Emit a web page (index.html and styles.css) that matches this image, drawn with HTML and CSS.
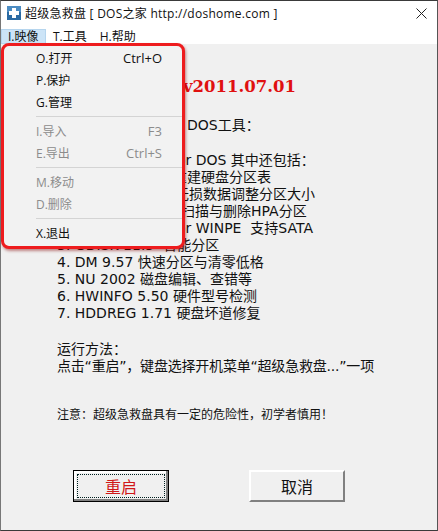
FILE: index.html
```html
<!DOCTYPE html>
<html lang="zh">
<head>
<meta charset="utf-8">
<title>超级急救盘</title>
<link rel="stylesheet" href="styles.css">
</head>
<body>
<div class="window">
  <header class="titlebar">
    <svg class="app-icon" width="14" height="14" viewBox="0 0 14 14"><rect width="14" height="14" fill="#2a6aa3"/><rect width="14" height="6" fill="#4c8cc2"/><path d="M5 2h4v3h3v4H9v3H5V9H2V5h3z" fill="#fff"/></svg>
    <span class="title-text">超级急救盘 [ DOS之家 http://doshome.com ]</span>
    <svg class="close" width="11" height="11" viewBox="0 0 11 11"><path d="M.5.5l10 10M10.5.5l-10 10" stroke="#222" stroke-width="1" fill="none"/></svg>
  </header>
  <nav class="menubar">
    <span class="menu-item active">I.映像</span>
    <span class="menu-item">T.工具</span>
    <span class="menu-item">H.帮助</span>
  </nav>
  <main class="client">
    <div class="content">
      <div class="version">v2011.07.01</div>
      <div class="intro">DOS工具&#xFF1A;</div>
      <div class="tools">
        <div class="tail-for">for DOS 其中还包括&#xFF1A;</div>
        <div class="sub-a">重建硬盘分区表</div>
        <div class="sub-b">无损数据调整分区大小</div>
        <div class="sub-c">扫描与删除HPA分区</div>
        <div class="tail-for">for WINPE&nbsp; 支持SATA</div>
        <div>3. GDISK 11.5&nbsp; 智能分区</div>
        <div>4. DM 9.57 快速分区与清零低格</div>
        <div>5. NU 2002 磁盘编辑、查错等</div>
        <div>6. HWINFO 5.50 硬件型号检测</div>
        <div>7. HDDREG 1.71 硬盘坏道修复</div>
      </div>
      <div class="usage">
        <div>运行方法&#xFF1A;</div>
        <div class="usage-line">点击“重启”&#xFF0C;键盘选择开机菜单“超级急救盘...”一项</div>
      </div>
      <div class="note">注意&#xFF1A;超级急救盘具有一定的危险性&#xFF0C;初学者慎用&#xFF01;</div>
    </div>
    <div class="buttons">
      <button class="btn primary"><span class="focus">重启</span></button>
      <button class="btn"><span class="plain">取消</span></button>
    </div>
    <div class="dropdown">
      <div class="drop-row"><span>O.打开</span><span class="key">Ctrl+O</span></div>
      <div class="drop-row"><span>P.保护</span></div>
      <div class="drop-row"><span>G.管理</span></div>
      <div class="sep"></div>
      <div class="drop-row off"><span>I.导入</span><span class="key">F3</span></div>
      <div class="drop-row off"><span>E.导出</span><span class="key">Ctrl+S</span></div>
      <div class="sep"></div>
      <div class="drop-row off"><span>M.移动</span></div>
      <div class="drop-row off"><span>D.删除</span></div>
      <div class="sep"></div>
      <div class="drop-row"><span>X.退出</span></div>
    </div>
  </main>
</div>
</body>
</html>
```
FILE: styles.css
```css
* { box-sizing: border-box; }
html, body { margin: 0; height: 100%; }
body { font-family: "DejaVu Sans", "Noto Sans CJK SC", sans-serif; overflow: hidden; }
.window { position: relative; width: 438px; height: 531px; display: flex; flex-direction: column; background: #f0f0f0; border: 1px solid #3a3a3a; border-left-color: #777; border-right-color: #555; }
.titlebar { height: 28px; background: #fff; display: flex; align-items: center; padding: 0 10px 4px 6px; font: 12px "Open Sans", "Noto Sans CJK SC", sans-serif; color: #111; }
.app-icon { margin-right: 4px; }
.title-text { flex: 1; letter-spacing: 0.25px; }
.menubar { height: 15px; background: #fff; display: flex; font: 12px "Open Sans", "Noto Sans CJK SC", sans-serif; color: #111; }
.menu-item { padding: 0 6px 0 7px; line-height: 15px; }
.menu-item.active { background: #cce4f7; width: 45px; box-shadow: inset 0 0 0 1px #b5d5ee; }
.client { position: relative; flex: 1; display: flex; flex-direction: column; }
.content { flex: 1; padding: 32px 0 0 56px; font-size: 14px; line-height: 17px; color: #111; white-space: nowrap; }
.version { padding-left: 126px; font: bold 16.5px/22px "DejaVu Serif", serif; color: #e01010; }
.intro { margin-top: 19px; padding-left: 130px; }
.tools { margin-top: 18px; }
.tools > div { height: 17px; }
.tail-for { padding-left: 115px; }
.sub-a { padding-left: 116px; }
.sub-b { padding-left: 118px; }
.sub-c { padding-left: 124px; }
.usage { margin-top: 19px; }
.usage-line { letter-spacing: -0.2px; }
.note { margin-top: 32px; font-size: 12px; }
.buttons { display: flex; gap: 80px; padding: 0 0 28px 72px; }
.btn { width: 96px; height: 32px; padding: 0; background: #f0f0f0; border: 2px solid; border-color: #fff #808080 #808080 #fff; font: 16px "Noto Sans CJK SC", sans-serif; color: #111; }
.btn.primary { border: 1px solid #000; color: #d01818; box-shadow: inset -2px -2px 0 #808080, inset 2px 2px 0 #fff; padding: 3px; }
.focus { display: block; height: 100%; line-height: 22px; border: 1px dotted #002020; }
.plain { display: block; line-height: 26px; }
.dropdown { position: absolute; left: 0; top: -1px; width: 184px; height: 206px; padding: 1px 0 0 32px; background: #f2f2f2; border: 3px solid #ee1c1e; border-radius: 8px; box-shadow: 1px 2px 3px rgba(130, 0, 0, .45); font: 12px "Open Sans", "Noto Sans CJK SC", sans-serif; color: #111; }
.drop-row { height: 22px; display: flex; justify-content: space-between; align-items: center; padding: 0 20px 0 0; }
.key { font-size: 13px; }
.drop-row.off { color: #8c8c8c; }
.sep { height: 1px; margin: 3px 0; background: #d4d4d4; }
```
